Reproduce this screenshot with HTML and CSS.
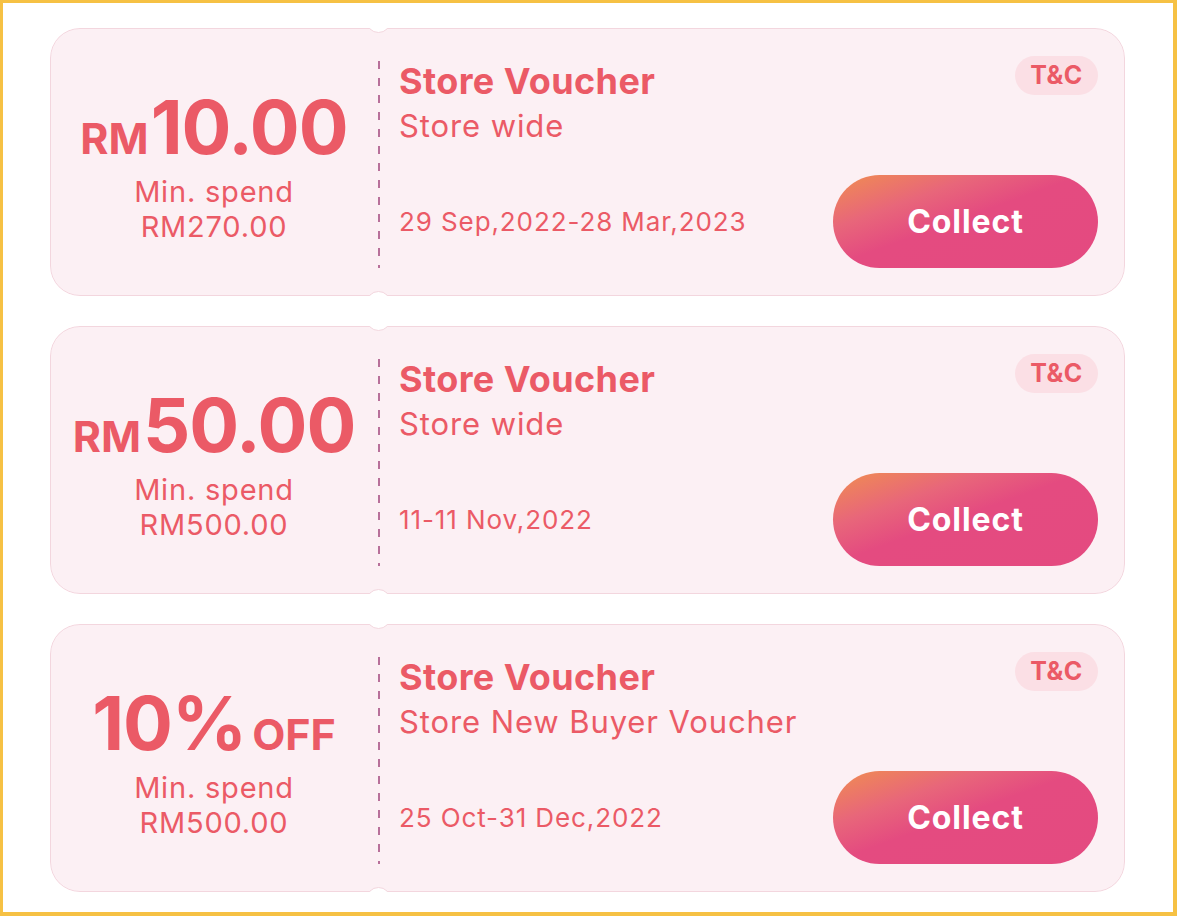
FILE: index.html
```html
<!DOCTYPE html>
<html lang="en">
<head>
<meta charset="utf-8">
<title>Store Vouchers</title>
<link rel="stylesheet" href="styles.css">
</head>
<body>
<div class="frame">
  <div class="card">
    <span class="notch notch-top"></span>
    <span class="notch notch-bottom"></span>
    <div class="value">
      <div class="amount"><span class="unit">RM</span><span class="big">10.00</span></div>
      <div class="min">Min. spend</div>
      <div class="min">RM270.00</div>
    </div>
    <div class="divider"></div>
    <div class="info">
      <div class="top-row">
        <div class="titles">
          <div class="title">Store Voucher</div>
          <div class="sub">Store wide</div>
        </div>
        <span class="tc">T&amp;C</span>
      </div>
      <div class="bottom-row">
        <div class="date">29 Sep,2022-28 Mar,2023</div>
        <button class="collect">Collect</button>
      </div>
    </div>
  </div>

  <div class="card">
    <span class="notch notch-top"></span>
    <span class="notch notch-bottom"></span>
    <div class="value">
      <div class="amount"><span class="unit">RM</span><span class="big">50.00</span></div>
      <div class="min">Min. spend</div>
      <div class="min">RM500.00</div>
    </div>
    <div class="divider"></div>
    <div class="info">
      <div class="top-row">
        <div class="titles">
          <div class="title">Store Voucher</div>
          <div class="sub">Store wide</div>
        </div>
        <span class="tc">T&amp;C</span>
      </div>
      <div class="bottom-row">
        <div class="date">11-11 Nov,2022</div>
        <button class="collect">Collect</button>
      </div>
    </div>
  </div>

  <div class="card">
    <span class="notch notch-top"></span>
    <span class="notch notch-bottom"></span>
    <div class="value">
      <div class="amount"><span class="big">10%</span><span class="unit off">OFF</span></div>
      <div class="min">Min. spend</div>
      <div class="min">RM500.00</div>
    </div>
    <div class="divider"></div>
    <div class="info">
      <div class="top-row">
        <div class="titles">
          <div class="title">Store Voucher</div>
          <div class="sub">Store New Buyer Voucher</div>
        </div>
        <span class="tc">T&amp;C</span>
      </div>
      <div class="bottom-row">
        <div class="date">25 Oct-31 Dec,2022</div>
        <button class="collect">Collect</button>
      </div>
    </div>
  </div>
</div>
</body>
</html>
```

FILE: styles.css
```css
* { box-sizing: border-box; }

html, body {
  margin: 0;
  padding: 0;
  background: #ffffff;
}

body {
  font-family: "Inter", "Noto Sans", sans-serif;
  color: #eb5a66;
}

.frame {
  width: 1177px;
  height: 916px;
  border-style: solid;
  border-color: #f6c144;
  border-width: 3px 4px 4px 3px;
  padding: 25px 48px 0 47px;
  display: flex;
  flex-direction: column;
  gap: 30px;
  background: #ffffff;
}

.card {
  position: relative;
  height: 268px;
  background: #fcf0f4;
  border-radius: 30px;
  display: flex;
  overflow: hidden;
}

.card::before {
  content: "";
  position: absolute;
  inset: 0;
  border: 1.5px solid #f3d6de;
  border-radius: 30px;
  pointer-events: none;
}

.notch {
  position: absolute;
  left: 316px;
  width: 25px;
  height: 25px;
  border-radius: 50%;
  background: #ffffff;
  border: 1.5px solid #f3d6de;
  z-index: 1;
}
.notch-top { top: -20px; }
.notch-bottom { bottom: -20px; }

.value {
  width: 328px;
  flex: none;
  display: flex;
  flex-direction: column;
  align-items: center;
  justify-content: center;
  padding-top: 9px;
}

.amount {
  display: flex;
  align-items: baseline;
  font-weight: 700;
  line-height: 1;
  margin-bottom: 10px;
}

.unit {
  font-size: 43px;
  margin-right: 2px;
}
.unit.off {
  margin-left: 6px;
  margin-right: 0;
}

.big {
  font-size: 74px;
  letter-spacing: -1px;
}

.min {
  font-size: 29px;
  line-height: 35px;
  letter-spacing: 0.8px;
}

.divider {
  width: 2px;
  flex: none;
  margin: 33px 0 28px;
  background: repeating-linear-gradient(to bottom, #b8709a 0 8px, transparent 8px 17px);
}

.info {
  flex: 1;
  display: flex;
  flex-direction: column;
  padding: 26px 27px 28px 19px;
}

.top-row {
  display: flex;
  justify-content: space-between;
  align-items: flex-start;
}

.title {
  font-size: 36px;
  font-weight: 700;
  line-height: 41px;
  margin-top: 7px;
  letter-spacing: 0.4px;
}

.sub {
  font-size: 31px;
  line-height: 36px;
  margin-top: 6px;
  letter-spacing: 0.9px;
}

.tc {
  background: #fbdfe5;
  border-radius: 20px;
  font-weight: 700;
  font-size: 25px;
  line-height: 39px;
  height: 39px;
  width: 83px;
  margin-top: 2px;
  text-align: center;
  letter-spacing: 0.5px;
}

.bottom-row {
  margin-top: auto;
  display: flex;
  justify-content: space-between;
  align-items: center;
}

.date {
  font-size: 26px;
  letter-spacing: 0.9px;
}

.collect {
  width: 265px;
  height: 93px;
  border: none;
  border-radius: 47px;
  background: linear-gradient(160deg, #f08e50 0%, #e8667a 28%, #e44b80 48%, #e44a80 100%);
  color: #ffffff;
  font-family: "Inter", "Noto Sans", sans-serif;
  font-size: 32px;
  font-weight: 700;
  letter-spacing: 0.9px;
  padding: 0;
}
```
